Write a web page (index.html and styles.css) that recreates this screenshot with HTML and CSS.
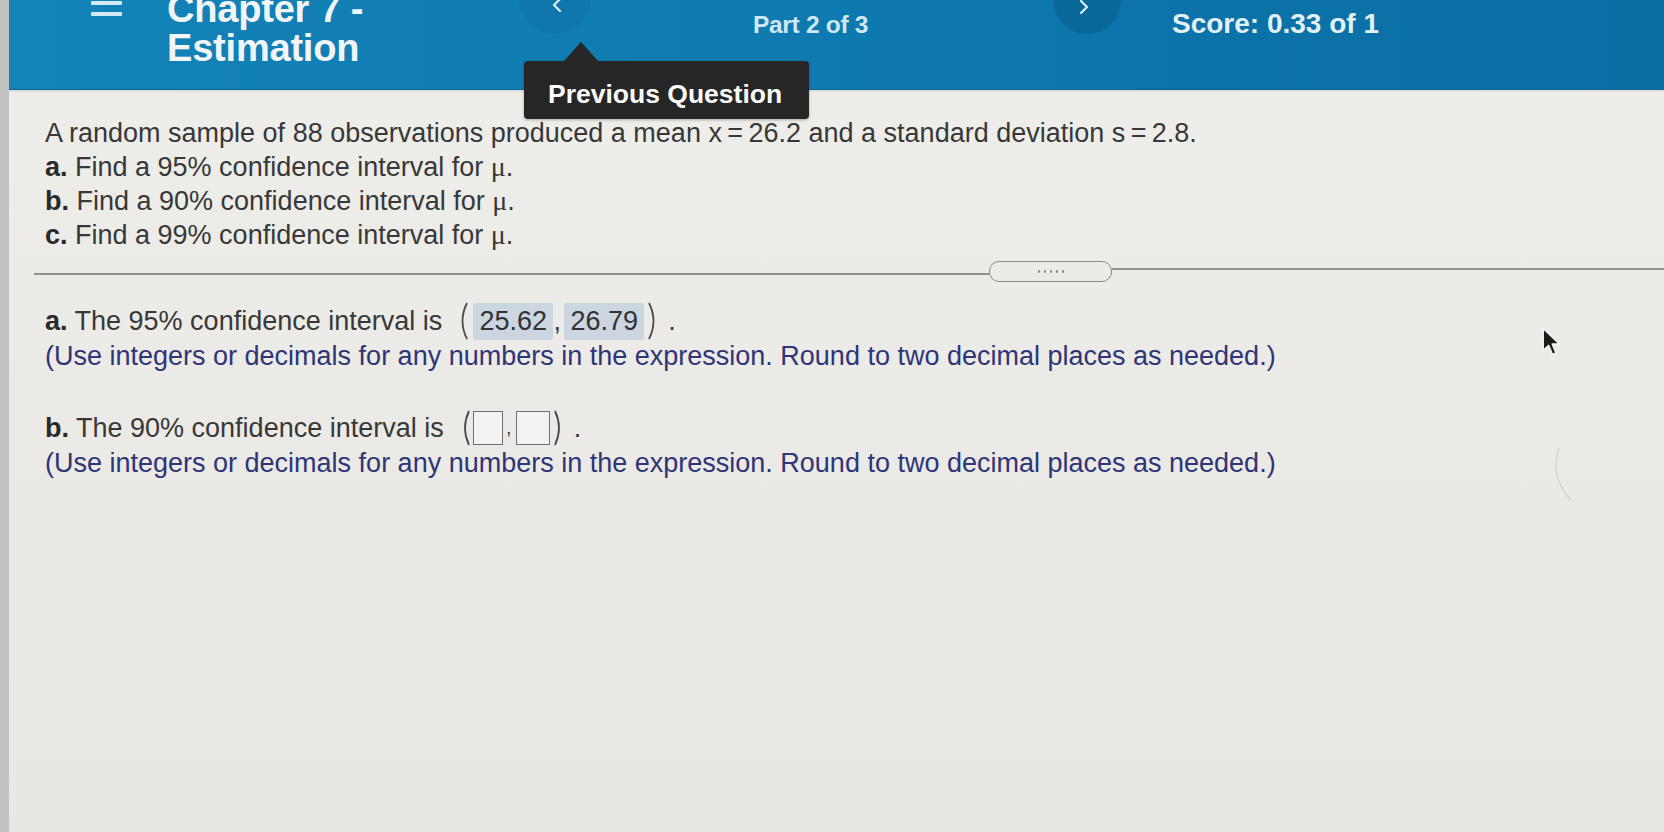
FILE: index.html
```html
<!DOCTYPE html>
<html lang="en">
<head>
<meta charset="utf-8">
<title>Chapter 7 - Estimation</title>
<link rel="stylesheet" href="styles.css">
</head>
<body>
<div class="screen">
  <header class="topbar">
    <div class="menu"><span></span><span></span><span></span></div>
    <div class="title">Chapter 7 -<br>Estimation</div>
    <div class="navbtn prev">
      <svg width="10" height="14" viewBox="0 0 10 14"><path d="M8 1 L2 7 L8 13" fill="none" stroke="#d9eef9" stroke-width="2.2" stroke-linecap="round" stroke-linejoin="round"/></svg>
    </div>
    <div class="part">Part 2 of 3</div>
    <div class="navbtn next">
      <svg width="10" height="14" viewBox="0 0 10 14"><path d="M2 1 L8 7 L2 13" fill="none" stroke="#d9eef9" stroke-width="2.2" stroke-linecap="round" stroke-linejoin="round"/></svg>
    </div>
    <div class="score">Score: 0.33 of 1</div>
  </header>

  <main class="content">
    <section class="question">
      <p class="line">A random sample of 88 observations produced a mean <span class="xbar">x</span>&#8201;=&#8201;26.2 and a standard deviation s&#8201;=&#8201;2.8.</p>
      <p class="line"><b>a.</b> Find a 95% confidence interval for <span class="mu">μ</span>.</p>
      <p class="line"><b>b.</b> Find a 90% confidence interval for <span class="mu">μ</span>.</p>
      <p class="line"><b>c.</b> Find a 99% confidence interval for <span class="mu">μ</span>.</p>
    </section>

    <div class="divider">
      <span class="rule left"></span>
      <span class="pill"><i></i><i></i><i></i><i></i><i></i></span>
      <span class="rule right"></span>
    </div>

    <section class="answers">
      <div class="ans-row">
        <span class="txt"><b>a.</b> The 95% confidence interval is</span>
        <svg class="paren open" width="14" height="40" viewBox="0 0 14 40"><path d="M11 2 Q2 20 11 38" fill="none" stroke="#4a4a4a" stroke-width="1.8"/></svg>
        <span class="box filled">25.62</span>
        <span class="comma">,</span>
        <span class="box filled">26.79</span>
        <svg class="paren close" width="14" height="40" viewBox="0 0 14 40"><path d="M3 2 Q12 20 3 38" fill="none" stroke="#4a4a4a" stroke-width="1.8"/></svg>
        <span class="period">.</span>
      </div>
      <p class="hint">(Use integers or decimals for any numbers in the expression. Round to two decimal places as needed.)</p>

      <div class="ans-row second">
        <span class="txt"><b>b.</b> The 90% confidence interval is</span>
        <svg class="paren open" width="14" height="40" viewBox="0 0 14 40"><path d="M11 3 Q3 20 11 37" fill="none" stroke="#4a4a4a" stroke-width="1.8"/></svg>
        <span class="box empty"></span>
        <span class="comma small">,</span>
        <span class="box empty wide"></span>
        <svg class="paren close" width="14" height="40" viewBox="0 0 14 40"><path d="M3 3 Q11 20 3 37" fill="none" stroke="#4a4a4a" stroke-width="1.8"/></svg>
        <span class="period">.</span>
      </div>
      <p class="hint">(Use integers or decimals for any numbers in the expression. Round to two decimal places as needed.)</p>
    </section>
  </main>

  <div class="tooltip">Previous Question</div>

  <svg class="cursor" width="22" height="33" viewBox="0 0 16 24"><path d="M1.5 1.5 L1.5 18 L5.5 14.2 L8.3 20.8 L11 19.6 L8.3 13.2 L13.6 13.2 Z" fill="#1c1c1c" stroke="#f4f4f4" stroke-width="1.3" stroke-linejoin="round"/></svg>
  <svg class="glare" width="24" height="56" viewBox="0 0 24 56"><path d="M8 2 Q-2 30 20 54" fill="none" stroke="#d2d2cf" stroke-width="1.2"/></svg>
</div>
</body>
</html>
```

FILE: styles.css
```css
* { box-sizing: border-box; }

html, body {
  margin: 0;
  padding: 0;
  width: 1664px;
  height: 832px;
  overflow: hidden;
}

body {
  font-family: "Liberation Sans", Arial, Helvetica, sans-serif;
  background: #e9e8e4;
}

.screen {
  position: relative;
  width: 1664px;
  height: 832px;
  border-left: 9px solid #c2c2c1;
  background: linear-gradient(180deg, #eeeeeb 0%, #ebeae6 50%, #e8e7e3 100%);
  overflow: hidden;
}

/* ---------- top bar ---------- */
.topbar {
  display: flex;
  align-items: flex-start;
  height: 90px;
  background: linear-gradient(90deg, #1483b7 0%, #0f7bb0 45%, #0b72a7 75%, #0a6ea3 100%);
  border-bottom: 1px solid #0c679a;
  box-shadow: 0 1px 2px rgba(0, 0, 0, 0.12);
  overflow: hidden;
  color: #f2f7fa;
}

.menu {
  margin-left: 82px;
  margin-top: -10px;
  width: 31px;
  display: flex;
  flex-direction: column;
  gap: 7px;
}
.menu span {
  display: block;
  height: 4px;
  border-radius: 1px;
  background: #d3eaf6;
}

.title {
  margin-left: 45px;
  margin-top: -10px;
  width: 352px;
  font-size: 38px;
  line-height: 39px;
  font-weight: 700;
  color: #f1f5f7;
  letter-spacing: -0.2px;
}

.navbtn {
  flex: none;
  border-radius: 50%;
  display: flex;
  justify-content: center;
  align-items: flex-end;
}
.navbtn.prev {
  width: 72px;
  height: 72px;
  margin-top: -38px;
  padding-bottom: 22px;
  padding-left: 4px;
  background: rgba(0, 40, 70, 0.06);
}
.navbtn.next {
  width: 68px;
  height: 68px;
  margin-left: 186px;
  margin-top: -34px;
  padding-bottom: 20px;
  padding-right: 6px;
  background: rgba(0, 40, 70, 0.16);
}

.part {
  margin-left: 162px;
  margin-top: 13px;
  width: 114px;
  font-size: 24.5px;
  line-height: 24.5px;
  font-weight: 700;
  color: #cfe8f5;
  white-space: nowrap;
  letter-spacing: -0.3px;
}

.score {
  margin-left: 51px;
  margin-top: 10px;
  font-size: 28px;
  line-height: 28px;
  font-weight: 700;
  color: #e3f0f7;
  white-space: nowrap;
}

/* ---------- content ---------- */
.content {
  padding-top: 27px;
}

.question {
  padding-left: 36px;
}
.line {
  margin: 0;
  font-size: 27px;
  line-height: 33px;
  color: #383838;
  white-space: nowrap;
}
.line b, .ans-row b {
  color: #2a2a2a;
}
.mu {
  font-family: "Liberation Serif", "Times New Roman", serif;
  font-size: 28px;
}

.divider {
  display: flex;
  align-items: center;
  margin-top: 9px;
  margin-left: 25px;
  height: 21px;
}
.rule {
  height: 2px;
  background: #8f8f8d;
}
.rule.left {
  width: 955px;
  transform: translateY(2px);
}
.rule.right {
  flex: 1;
  transform: translateY(-3px);
}
.pill {
  flex: none;
  width: 123px;
  height: 21px;
  border: 1.5px solid #8a8a88;
  border-radius: 10px;
  background: #ecebe8;
  display: flex;
  justify-content: center;
  align-items: center;
  gap: 4px;
}
.pill i {
  display: block;
  width: 2px;
  height: 3px;
  background: #8a8a8a;
  border-radius: 1px;
}

.answers {
  padding-left: 36px;
  margin-top: 19px;
}
.ans-row {
  display: flex;
  align-items: center;
  height: 40px;
  font-size: 27px;
  color: #383838;
}
.ans-row.second {
  margin-top: 37px;
}
.txt {
  line-height: 31px;
  white-space: nowrap;
}
.paren {
  flex: none;
}
.paren.open {
  margin-left: 14px;
}
.paren.close {
  margin-left: 2px;
}
.box {
  flex: none;
  line-height: 31px;
}
.box.filled {
  width: 80px;
  height: 37px;
  margin-left: 3px;
  background: #cbd6e1;
  border-radius: 2px;
  display: flex;
  align-items: center;
  justify-content: center;
  color: #333;
}
.box.empty {
  width: 30px;
  height: 34px;
  border: 1.5px solid #707070;
  background: #f3f3f1;
  margin-left: 1px;
}
.box.empty.wide {
  width: 34px;
}
.comma {
  width: 8px;
  text-align: center;
  line-height: 31px;
}
.comma.small {
  width: 12px;
  font-size: 18px;
}
.period {
  margin-left: 8px;
  line-height: 31px;
}

.hint {
  margin: 0;
  font-size: 27px;
  line-height: 30px;
  color: #2f3577;
  white-space: nowrap;
}

/* ---------- overlays ---------- */
.tooltip {
  position: absolute;
  left: 515px;
  top: 61px;
  width: 285px;
  height: 58px;
  background: #262626;
  border-radius: 4px;
  color: #fafafa;
  font-size: 26.5px;
  font-weight: 700;
  line-height: 66px;
  padding-left: 24px;
  white-space: nowrap;
  overflow: visible;
  box-shadow: 0 1px 3px rgba(0, 0, 0, 0.3);
}
.tooltip::before {
  content: "";
  position: absolute;
  left: 40px;
  top: -19px;
  border-left: 17px solid transparent;
  border-right: 17px solid transparent;
  border-bottom: 19px solid #262626;
}

.cursor {
  position: absolute;
  left: 1532px;
  top: 326px;
}
.glare {
  position: absolute;
  left: 1542px;
  top: 446px;
}
```
